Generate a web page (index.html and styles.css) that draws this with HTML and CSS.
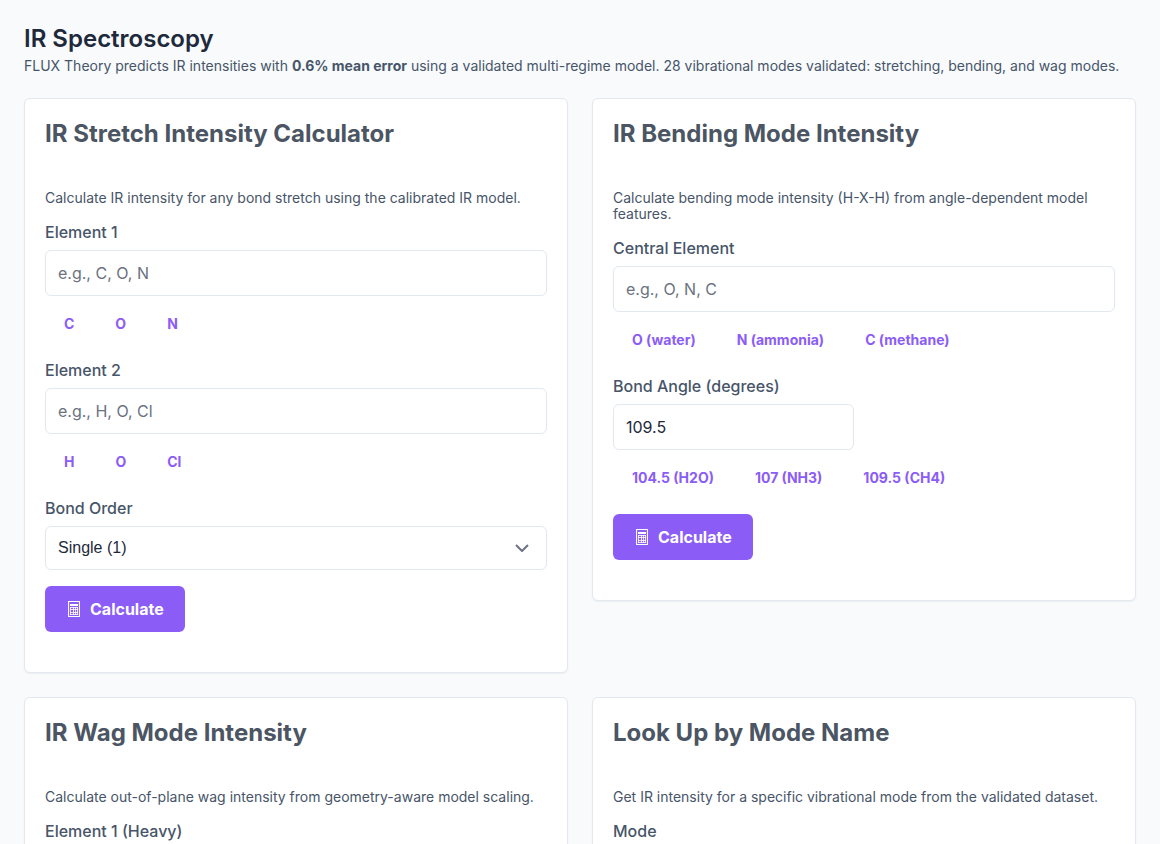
FILE: index.html
```html
<!DOCTYPE html>
<html lang="en">
<head>
    <meta charset="UTF-8">
    <meta name="viewport" content="width=device-width, initial-scale=1.0">
    <title>IR Spectroscopy</title>
    <link rel="stylesheet" href="styles.css">
</head>
<body>
    <!-- Shared icon -->
    <svg class="sprite" aria-hidden="true">
        <symbol id="calculator" viewBox="0 0 12 16">
            <rect x="0.5" y="0.5" width="11" height="15" rx="0.5" fill="none" stroke="currentColor" stroke-width="1.2"/>
            <rect x="2" y="3" width="8" height="2" fill="currentColor"/>
            <path d="M2 6.5h8M2 8.5h8M2 11.5h8M2 13.5h8M2.5 6v8M5.5 6v8M7.5 6v8M9.5 6v8" fill="none" stroke="currentColor" stroke-opacity="0.8"/>
        </symbol>
    </svg>

    <main class="page">
        <header class="page-header">
            <h1>IR Spectroscopy</h1>
            <p>FLUX Theory predicts IR intensities with <strong>0.6% mean error</strong> using a validated multi-regime model. 28 vibrational modes validated: stretching, bending, and wag modes.</p>
        </header>

        <div class="grid">
            <section class="card">
                <h2>IR Stretch Intensity Calculator</h2>
                <p class="description">Calculate IR intensity for any bond stretch using the calibrated IR model.</p>
                <form class="form">
                    <div class="field">
                        <label for="element1">Element 1</label>
                        <input type="text" id="element1" placeholder="e.g., C, O, N">
                        <div class="chips">
                            <button type="button">C</button>
                            <button type="button">O</button>
                            <button type="button">N</button>
                        </div>
                    </div>
                    <div class="field">
                        <label for="element2">Element 2</label>
                        <input type="text" id="element2" placeholder="e.g., H, O, Cl">
                        <div class="chips">
                            <button type="button">H</button>
                            <button type="button">O</button>
                            <button type="button">Cl</button>
                        </div>
                    </div>
                    <div class="field">
                        <label for="bondOrder">Bond Order</label>
                        <div class="select">
                            <select id="bondOrder">
                                <option>Single (1)</option>
                            </select>
                            <svg class="chevron" viewBox="0 0 14 8" aria-hidden="true"><path d="M1 1l6 6 6-6"/></svg>
                        </div>
                    </div>
                    <button type="button" class="btn-primary">
                        <svg class="icon" aria-hidden="true"><use href="#calculator"/></svg>
                        Calculate
                    </button>
                </form>
            </section>

            <section class="card">
                <h2>IR Bending Mode Intensity</h2>
                <p class="description">Calculate bending mode intensity (H-X-H) from angle-dependent model features.</p>
                <form class="form">
                    <div class="field">
                        <label for="central">Central Element</label>
                        <input type="text" id="central" placeholder="e.g., O, N, C">
                        <div class="chips">
                            <button type="button">O (water)</button>
                            <button type="button">N (ammonia)</button>
                            <button type="button">C (methane)</button>
                        </div>
                    </div>
                    <div class="field">
                        <label for="angle">Bond Angle (degrees)</label>
                        <input type="text" inputmode="decimal" id="angle" class="short" value="109.5">
                        <div class="chips">
                            <button type="button">104.5 (H2O)</button>
                            <button type="button">107 (NH3)</button>
                            <button type="button">109.5 (CH4)</button>
                        </div>
                    </div>
                    <button type="button" class="btn-primary">
                        <svg class="icon" aria-hidden="true"><use href="#calculator"/></svg>
                        Calculate
                    </button>
                </form>
            </section>

            <section class="card">
                <h2>IR Wag Mode Intensity</h2>
                <p class="description">Calculate out-of-plane wag intensity from geometry-aware model scaling.</p>
                <form class="form">
                    <div class="field">
                        <label for="heavy">Element 1 (Heavy)</label>
                        <input type="text" id="heavy">
                    </div>
                </form>
            </section>

            <section class="card">
                <h2>Look Up by Mode Name</h2>
                <p class="description">Get IR intensity for a specific vibrational mode from the validated dataset.</p>
                <form class="form">
                    <div class="field">
                        <label for="mode">Mode</label>
                        <input type="text" id="mode">
                    </div>
                </form>
            </section>
        </div>
    </main>
</body>
</html>
```
FILE: styles.css
```css
* {
    margin: 0;
    padding: 0;
    box-sizing: border-box;
}

body {
    font-family: Inter, 'Liberation Sans', sans-serif;
    font-size: 16px;
    color: #475569;
    background: #f8fafc;
}

.sprite {
    display: none;
}

.page {
    padding: 24px;
}

.page-header {
    margin-bottom: 24px;
}

h1 {
    font-size: 24px;
    line-height: 30px;
    font-weight: 600;
    color: #1e293b;
    margin-bottom: 4px;
}

.page-header p {
    font-size: 14px;
    line-height: 16px;
}

.grid {
    display: grid;
    grid-template-columns: 1fr 1fr;
    gap: 24px;
    align-items: start;
}

.card {
    background: white;
    border: 1px solid #e2e8f0;
    border-radius: 6px;
    box-shadow: 0 1px 2px rgba(0, 0, 0, 0.05);
    padding: 20px 20px 40px;
}

h2 {
    font-size: 24px;
    line-height: 30px;
    font-weight: 700;
    color: #4b5563;
    margin-bottom: 41px;
}

.description {
    font-size: 14px;
    line-height: 16px;
    margin-bottom: 16px;
}

.form {
    display: flex;
    flex-direction: column;
    align-items: flex-start;
    gap: 16px;
}

.field {
    width: 100%;
}

label {
    display: block;
    line-height: 20px;
    font-weight: 500;
    margin-bottom: 8px;
}

input,
select {
    display: block;
    width: 100%;
    height: 46px;
    padding: 0 12px;
    border: 1px solid #e2e8f0;
    border-radius: 6px;
    background: white;
    color: #1e293b;
    font-family: inherit;
    font-size: 16px;
}

input::placeholder {
    color: #6b7280;
}

.short {
    max-width: 241px;
}

.select {
    position: relative;
}

select {
    height: 44px;
    padding-bottom: 2px;
    font-family: 'Liberation Sans', Arial, sans-serif;
    appearance: none;
}

.chevron {
    position: absolute;
    top: 18px;
    right: 18px;
    width: 14px;
    height: 8px;
    fill: none;
    stroke: #6b7280;
    stroke-width: 2;
    pointer-events: none;
}

.chips {
    display: flex;
    flex-wrap: wrap;
    gap: 3px;
    margin-top: 8px;
}

.chips button {
    height: 40px;
    padding: 0 19px 2px;
    border: none;
    background: none;
    color: #8b5cf6;
    font-family: inherit;
    font-size: 14px;
    font-weight: 700;
    cursor: pointer;
}

.btn-primary {
    display: flex;
    align-items: center;
    gap: 10px;
    height: 46px;
    padding: 0 21px 0 23px;
    border: none;
    border-radius: 6px;
    background: #8b5cf6;
    color: white;
    font-family: inherit;
    font-size: 16px;
    font-weight: 700;
    cursor: pointer;
}

.icon {
    width: 12px;
    height: 16px;
}
```
